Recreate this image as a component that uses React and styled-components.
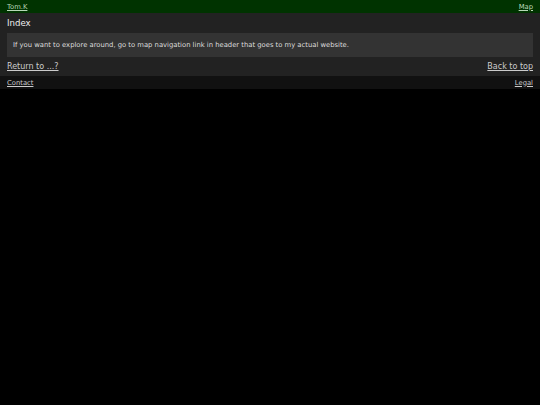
import React from "react";
import styled, { createGlobalStyle } from "styled-components";

const GlobalStyle = createGlobalStyle`
  html, body {
    margin: 0;
    padding: 0;
    background: #000;
    font-family: "DejaVu Sans", Verdana, sans-serif;
    color: #ddd;
  }
`;

const Header = styled.header`
  display: flex;
  align-items: center;
  justify-content: space-between;
  height: 13px;
  padding: 0 7px;
  background: #003300;
  font-size: 6.8px;
`;

const Link = styled.a`
  color: ${(p) => p.color || "#ccc"};
  text-decoration: underline;
  cursor: pointer;
`;

const Main = styled.main`
  background: #222;
  padding: 0 7px;
`;

const Title = styled.h1`
  margin: 0;
  height: 20px;
  font-size: 8.6px;
  font-weight: normal;
  line-height: 20px;
  color: #eee;
`;

const Notice = styled.div`
  display: flex;
  align-items: center;
  height: 24px;
  padding: 0 6px;
  background: #333;
  font-size: 6.8px;
  color: #ddd;
`;

const NavRow = styled.div`
  display: flex;
  align-items: center;
  justify-content: space-between;
  height: 19px;
  font-size: 8px;
`;

const Footer = styled.footer`
  display: flex;
  align-items: center;
  justify-content: space-between;
  height: 13px;
  padding: 0 7px;
  background: #111;
  font-size: 6.8px;
`;

export default function App() {
  return (
    <>
      <GlobalStyle />
      <Header>
        <Link color="#b8d8b8">Tom.K</Link>
        <Link color="#b8d8b8">Map</Link>
      </Header>
      <Main>
        <Title>Index</Title>
        <Notice>
          If you want to explore around, go to map navigation link in header that goes to my actual website.
        </Notice>
        <NavRow>
          <Link>Return to ...?</Link>
          <Link>Back to top</Link>
        </NavRow>
      </Main>
      <Footer>
        <Link>Contact</Link>
        <Link>Legal</Link>
      </Footer>
    </>
  );
}
